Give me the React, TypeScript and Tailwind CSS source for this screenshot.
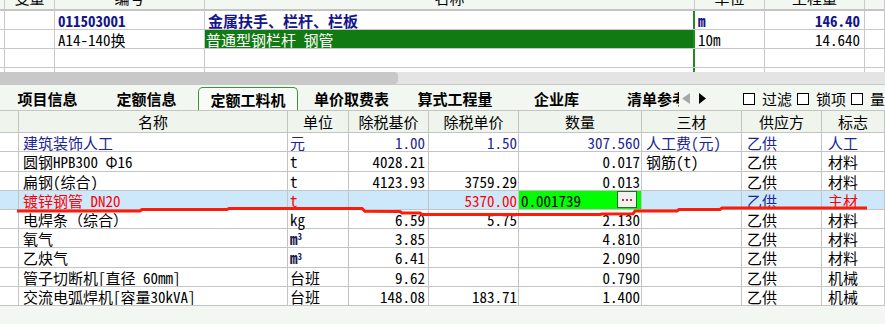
import type { ReactNode } from 'react';

const navy = 'text-[#14168a]';

const topCols = ['w-[5px]', 'w-[50px]', 'w-[150px]', 'w-[490px]', 'w-[70px]', 'w-[100px]', 'w-[20px]'];

function TopGrid() {
  const heads = ['', '变量', '编号', '名称', '单位', '工程量', ''];
  const rows: ReactNode[][] = [
    [
      '',
      '',
      <span className={`font-bold pl-[3px] ${navy}`}>011503001</span>,
      <span className={`font-bold pl-[3px] ${navy}`}>金属扶手、栏杆、栏板</span>,
      <span className={`font-bold pl-[3px] ${navy}`}>m</span>,
      <span className={`font-bold ml-auto pr-[4px] ${navy}`}>146.40</span>,
      '',
    ],
    [
      '',
      '',
      <span className="pl-[3px]">A14-140换</span>,
      <span className="flex items-center h-full w-full bg-[#117a12] text-white pl-[1px]">普通型钢栏杆 钢管</span>,
      <span className="pl-[3px]">10m</span>,
      <span className="ml-auto pr-[4px]">14.640</span>,
      '',
    ],
    ['', '', '', '', '', '', ''],
  ];
  return (
    <div>
      <div className="flex h-[11px] border-b-2 border-[#c4c4c4] overflow-hidden">
        {topCols.map((c, i) => (
          <div key={i} className={`${c} h-[9px] shrink-0 border-r border-[#cacaca] overflow-visible`}>
            <div className="-mt-[12px] h-[20px] leading-[20px] text-center whitespace-nowrap">{heads[i]}</div>
          </div>
        ))}
      </div>
      {rows.map((r, ri) => (
        <div key={ri} className="flex h-[19px] border-b border-[#c8c8c8] bg-white">
          {r.map((cell, i) => (
            <div
              key={i}
              className={`${topCols[i]} shrink-0 h-full flex items-center whitespace-nowrap overflow-hidden ${
                i === 3 ? 'border-r-2 border-[#1e8c1e]' : 'border-r border-[#c8c8c8]'
              }`}
            >
              {cell}
            </div>
          ))}
        </div>
      ))}
      <div className="flex h-[4px] bg-white">
        {topCols.map((c, i) => (
          <div key={i} className={`${c} shrink-0 h-full ${i === 3 ? 'border-r-2 border-[#1e8c1e]' : 'border-r border-[#c8c8c8]'}`} />
        ))}
      </div>
      <div className="h-[13px] bg-[#e4e4e4] border-b border-[#c8c8c8]">
        <div className="w-[398px] h-full bg-[#c8c8c8] rounded-r-[4px]" />
      </div>
    </div>
  );
}

function Check({ label }: { label: string }) {
  return (
    <div className="flex items-center shrink-0">
      <span className="w-[12px] h-[12px] border border-black bg-white shrink-0" />
      <span className="ml-[7px]">{label}</span>
    </div>
  );
}

function TabBar() {
  const tab = 'shrink-0 h-[23px] flex items-center justify-center';
  return (
    <div className="flex items-end h-[25px] font-bold overflow-hidden">
      <div className={`${tab} w-[95px]`}>项目信息</div>
      <div className={`${tab} w-[103px]`}>定额信息</div>
      <div className={`${tab} w-[100px] border border-b-0 border-[#3f8f3f] rounded-t-[5px] bg-[#f9fbf8]`}>定额工料机</div>
      <div className={`${tab} w-[107px]`}>单价取费表</div>
      <div className={`${tab} w-[100px]`}>算式工程量</div>
      <div className={`${tab} w-[103px]`}>企业库</div>
      <div className="shrink-0 ml-[19px] w-[52px] h-[23px] flex items-center overflow-hidden whitespace-nowrap">清单参考</div>
      <div className="shrink-0 h-[23px] flex items-center ml-[3px]">
        <svg width="8" height="11" viewBox="0 0 8 11">
          <path d="M8 0 L0 5.5 L8 11 Z" fill="#a8a8a8" />
        </svg>
        <svg width="7" height="11" viewBox="0 0 7 11" className="ml-[9px]">
          <path d="M0 0 L7 5.5 L0 11 Z" fill="#000" />
        </svg>
      </div>
      <div className="shrink-0 h-[23px] flex items-center font-normal ml-[37px] gap-[5px] whitespace-nowrap">
        <Check label="过滤" />
        <Check label="锁项" />
        <Check label="量价" />
      </div>
    </div>
  );
}

const cw = ['w-[19px]', 'w-[269px]', 'w-[61px]', 'w-[80px]', 'w-[90px]', 'w-[123px]', 'w-[100px]', 'w-[80px]', 'w-[63px]'];
const rh = ['h-[19px]', 'h-[20px]', 'h-[19px]', 'h-[19px]', 'h-[19px]', 'h-[19px]', 'h-[20px]', 'h-[19px]', 'h-[19px]'];

type Item = {
  name: string;
  unit: ReactNode;
  base: string;
  price: string;
  qty: string;
  san: string;
  flag: string;
  tone?: 'blue' | 'red';
};

const cubic = (
  <span className="font-bold text-[#1c1c50]">
    m<sup className="text-[9px]">3</sup>
  </span>
);

const items: Item[] = [
  { name: '建筑装饰人工', unit: '元', base: '1.00', price: '1.50', qty: '307.560', san: '人工费(元)', flag: '人工', tone: 'blue' },
  { name: '圆钢HPB300 Φ16', unit: 't', base: '4028.21', price: '', qty: '0.017', san: '钢筋(t)', flag: '材料' },
  { name: '扁钢(综合)', unit: 't', base: '4123.93', price: '3759.29', qty: '0.013', san: '', flag: '材料' },
  { name: '镀锌钢管 DN20', unit: 't', base: '', price: '5370.00', qty: '0.001739', san: '', flag: '主材', tone: 'red' },
  { name: '电焊条（综合）', unit: 'kg', base: '6.59', price: '5.75', qty: '2.130', san: '', flag: '材料' },
  { name: '氧气', unit: cubic, base: '3.85', price: '', qty: '4.810', san: '', flag: '材料' },
  { name: '乙炔气', unit: cubic, base: '6.41', price: '', qty: '2.090', san: '', flag: '材料' },
  { name: '管子切断机[直径 60mm]', unit: '台班', base: '9.62', price: '', qty: '0.790', san: '', flag: '机械' },
  { name: '交流电弧焊机[容量30kVA]', unit: '台班', base: '148.08', price: '183.71', qty: '1.400', san: '', flag: '机械' },
];

function DetailGrid() {
  const heads = ['', '名称', '单位', '除税基价', '除税单价', '数量', '三材', '供应方', '标志'];
  return (
    <div>
      <div className="flex h-[23px] border-y border-[#c4c4c4] bg-[#eff4ed]">
        {heads.map((h, i) => (
          <div key={i} className={`${cw[i]} shrink-0 h-full flex items-center justify-center border-r border-[#c4c4c4]`}>
            {h}
          </div>
        ))}
      </div>
      {items.map((it, ri) => {
        const red = it.tone === 'red';
        const tone = it.tone === 'blue' ? 'text-[#1c2596]' : red ? 'text-[#ff0000]' : 'text-black';
        const cell = 'shrink-0 h-full flex items-center whitespace-nowrap border-r border-[#c4c4c4]';
        return (
          <div key={ri} className={`flex ${rh[ri]} border-b border-[#c4c4c4] ${red ? 'bg-[#cde8fb]' : 'bg-white'}`}>
            <div className={`${cw[0]} ${cell}`} />
            <div className={`${cw[1]} ${cell} pl-[4px] overflow-hidden ${tone}`}>{it.name}</div>
            <div className={`${cw[2]} ${cell} pl-[2px] ${tone}`}>{it.unit}</div>
            <div className={`${cw[3]} ${cell} justify-end pr-[3px] ${tone}`}>{it.base}</div>
            <div className={`${cw[4]} ${cell} justify-end pr-[1px] ${tone}`}>{it.price}</div>
            {red ? (
              <div className={`${cw[5]} ${cell} bg-[#00ff00] pl-[2px] relative`}>
                <span>{it.qty}</span>
                <span className="absolute right-[4px] top-0 w-[20px] h-[17px] border border-[#2c6b2c] bg-[#eef2ea] flex items-center justify-center gap-[2px]">
                  <i className="w-[2px] h-[2px] bg-[#b8305a]" />
                  <i className="w-[2px] h-[2px] bg-[#b8305a]" />
                  <i className="w-[2px] h-[2px] bg-[#b8305a]" />
                </span>
              </div>
            ) : (
              <div className={`${cw[5]} ${cell} justify-end pr-[1px] ${tone}`}>{it.qty}</div>
            )}
            <div className={`${cw[6]} ${cell} pl-[4px] ${tone}`}>{it.san}</div>
            <div className={`${cw[7]} ${cell} pl-[5px] ${it.tone ? 'text-[#1c2596]' : 'text-black'}`}>乙供</div>
            <div className={`${cw[8]} ${cell} pl-[6px] ${tone}`}>{it.flag}</div>
          </div>
        );
      })}
    </div>
  );
}

function RedMark() {
  return (
    <svg className="absolute inset-0 pointer-events-none" width="885" height="324" viewBox="0 0 885 324">
      <path
        d="M17 211 L140 211 L142 209.5 L227 209.5 L229 208.5 L362 208.5 L365 211.3 L400 211.5 L402 213 L420 213 L422 214.5 L600 214.5 L602 214 L633 213.8 L635 211 L677 211 L679 209.5 L720 209.5 L722 208 L867 208"
        fill="none"
        stroke="#ff1a0a"
        strokeWidth="3"
      />
    </svg>
  );
}

export default function App() {
  return (
    <div className="relative w-[885px] h-[324px] overflow-hidden bg-[#f3f7f1] text-[15px] leading-none text-black font-['Noto_Sans_Mono_CJK_SC','Noto_Sans_CJK_SC',sans-serif]">
      <TopGrid />
      <TabBar />
      <DetailGrid />
      <RedMark />
    </div>
  );
}
